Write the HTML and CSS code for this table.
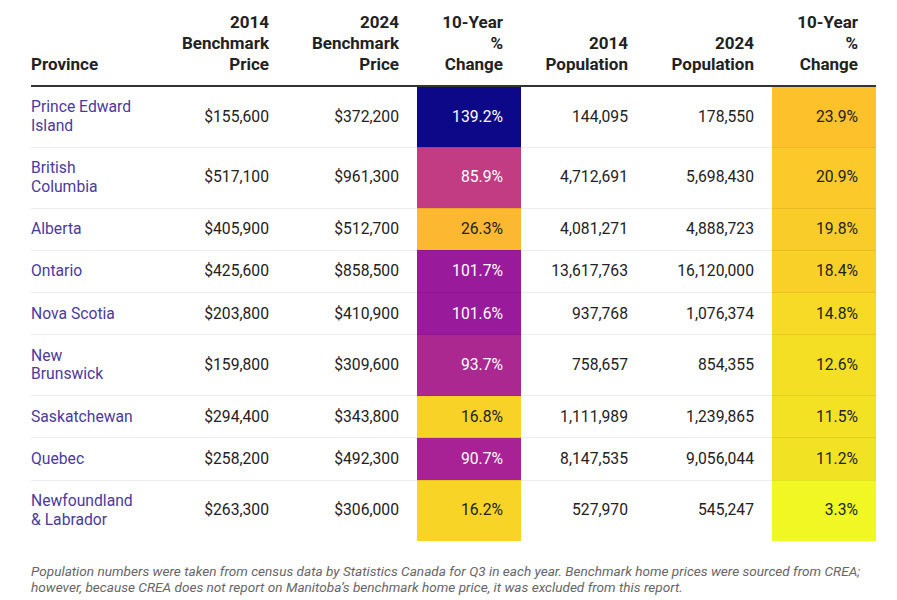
FILE: index.html
```html
<!DOCTYPE html>
<html lang="en">
<head>
<meta charset="utf-8">
<title>Benchmark Price and Population by Province</title>
<link rel="stylesheet" href="styles.css">
</head>
<body>
<div class="wrap">
  <table class="data">
    <colgroup>
      <col class="c1"><col class="c2"><col class="c3"><col class="c4"><col class="c5"><col class="c6"><col class="c7">
    </colgroup>
    <thead>
      <tr>
        <th class="left">Province</th>
        <th>2014<br>Benchmark<br>Price</th>
        <th>2024<br>Benchmark<br>Price</th>
        <th>10-Year<br>%<br>Change</th>
        <th>2014<br>Population</th>
        <th>2024<br>Population</th>
        <th>10-Year<br>%<br>Change</th>
      </tr>
    </thead>
    <tbody>
      <tr>
        <td class="prov">Prince Edward<br>Island</td><td>$155,600</td><td>$372,200</td>
        <td class="heat light" style="background:#0d0887">139.2%</td>
        <td>144,095</td><td>178,550</td>
        <td class="heat" style="background:#fcc12b">23.9%</td>
      </tr>
      <tr>
        <td class="prov">British<br>Columbia</td><td>$517,100</td><td>$961,300</td>
        <td class="heat light" style="background:#c13c82">85.9%</td>
        <td>4,712,691</td><td>5,698,430</td>
        <td class="heat" style="background:#fbc92a">20.9%</td>
      </tr>
      <tr>
        <td class="prov">Alberta</td><td>$405,900</td><td>$512,700</td>
        <td class="heat" style="background:#fcb830">26.3%</td>
        <td>4,081,271</td><td>4,888,723</td>
        <td class="heat" style="background:#facc29">19.8%</td>
      </tr>
      <tr>
        <td class="prov">Ontario</td><td>$425,600</td><td>$858,500</td>
        <td class="heat light" style="background:#9a1a9c">101.7%</td>
        <td>13,617,763</td><td>16,120,000</td>
        <td class="heat" style="background:#f9d027">18.4%</td>
      </tr>
      <tr>
        <td class="prov">Nova Scotia</td><td>$203,800</td><td>$410,900</td>
        <td class="heat light" style="background:#9a1a9c">101.6%</td>
        <td>937,768</td><td>1,076,374</td>
        <td class="heat" style="background:#f6da25">14.8%</td>
      </tr>
      <tr>
        <td class="prov">New<br>Brunswick</td><td>$159,800</td><td>$309,600</td>
        <td class="heat light" style="background:#ac2891">93.7%</td>
        <td>758,657</td><td>854,355</td>
        <td class="heat" style="background:#f4df24">12.6%</td>
      </tr>
      <tr>
        <td class="prov">Saskatchewan</td><td>$294,400</td><td>$343,800</td>
        <td class="heat" style="background:#f8d227">16.8%</td>
        <td>1,111,989</td><td>1,239,865</td>
        <td class="heat" style="background:#f3e224">11.5%</td>
      </tr>
      <tr>
        <td class="prov">Quebec</td><td>$258,200</td><td>$492,300</td>
        <td class="heat light" style="background:#a82296">90.7%</td>
        <td>8,147,535</td><td>9,056,044</td>
        <td class="heat" style="background:#f2e224">11.2%</td>
      </tr>
      <tr>
        <td class="prov">Newfoundland<br>&amp; Labrador</td><td>$263,300</td><td>$306,000</td>
        <td class="heat" style="background:#f8d426">16.2%</td>
        <td>527,970</td><td>545,247</td>
        <td class="heat" style="background:#f0f723">3.3%</td>
      </tr>
    </tbody>
  </table>
  <p class="note">Population numbers were taken from census data by Statistics Canada for Q3 in each year. Benchmark home prices were sourced from CREA; however, because CREA does not report on Manitoba’s benchmark home price, it was excluded from this report.</p>
</div>
</body>
</html>
```

FILE: styles.css
```css
html, body {
  margin: 0;
  padding: 0;
  background: #ffffff;
}

body {
  font-family: Roboto, "Liberation Sans", Arial, sans-serif;
  color: #222222;
}

.wrap {
  padding: 12px 21px 0 31px;
}

.data {
  width: 845px;
  border-collapse: collapse;
  table-layout: fixed;
  font-size: 15.7px;
}

.c1 { width: 126px; }
.c2 { width: 130px; }
.c3 { width: 130px; }
.c4 { width: 104px; }
.c5 { width: 125px; }
.c6 { width: 126px; }
.c7 { width: 104px; }

.data th {
  font-size: 17px;
  font-weight: 700;
  line-height: 21px;
  text-align: right;
  vertical-align: bottom;
  padding: 0 18px 10px 0;
  border-bottom: 2px solid #333333;
  color: #222222;
}

.data th.left {
  text-align: left;
  padding-left: 0;
}

.data td {
  line-height: 18.5px;
  text-align: right;
  vertical-align: middle;
  padding: 11.4px 18px 11.4px 0;
  border-bottom: 1px solid rgba(0, 0, 0, 0.07);
  color: #222222;
}

.data tbody tr:last-child td {
  border-bottom: none;
}

.data td.prov {
  text-align: left;
  color: #4b3a9e;
}

.data td.heat {
  color: #222222;
}

.data td.heat.light {
  color: #ffffff;
}

.note {
  margin: 22px 0 0 0;
  font-size: 13.6px;
  line-height: 16px;
  font-style: italic;
  color: #666666;
}
```
